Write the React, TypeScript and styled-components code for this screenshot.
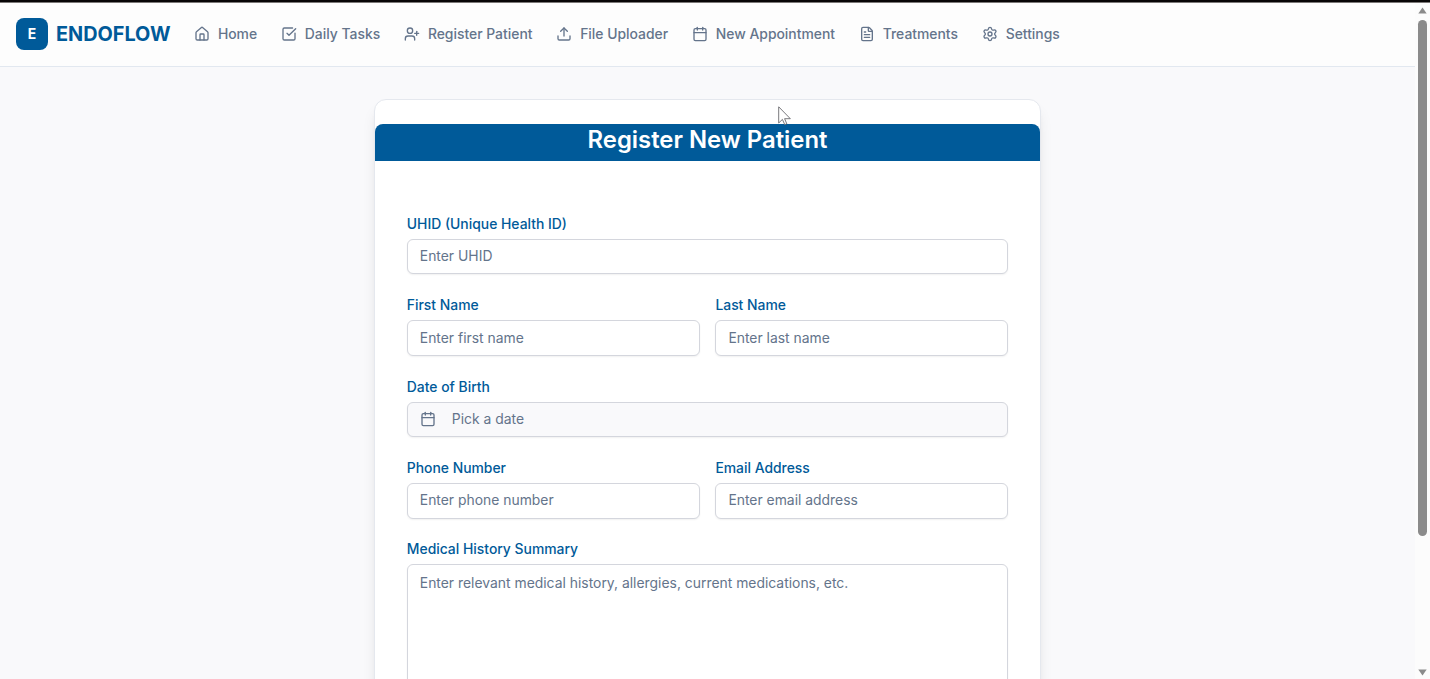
import React from 'react';
import styled, { createGlobalStyle } from 'styled-components';
import { House, SquareCheckBig, UserPlus, Upload, Calendar, FileText, Settings } from 'lucide-react';

const GlobalStyle = createGlobalStyle`
  *, *::before, *::after { box-sizing: border-box; }
  html, body { margin: 0; padding: 0; overflow: hidden; }
  body, input, textarea, button { font-family: Inter, "Liberation Sans", sans-serif; }
`;

const Screen = styled.div`
  height: 679px;
  display: flex;
  flex-direction: column;
  overflow: hidden;
  background: #f9f9fb;
`;

const TopEdge = styled.div`
  flex: none;
  height: 3px;
  background: #080606;
  border-bottom: 1px solid #7b7877;
`;

const Viewport = styled.div`
  flex: 1;
  min-height: 0;
  display: flex;
`;

const Page = styled.div`
  flex: 1;
  min-width: 0;
  overflow: hidden;
`;

const Header = styled.header`
  height: 64px;
  padding: 0 16px 1px;
  display: flex;
  align-items: center;
  background: #fdfdfd;
  border-bottom: 1px solid #e2e8f0;
`;

const Brand = styled.div`
  display: flex;
  align-items: center;
  gap: 8px;
  width: 178px;
  color: #005a99;
  font-size: 19.85px;
  font-weight: 700;
  white-space: nowrap;
`;

const BrandMark = styled.span`
  width: 32px;
  height: 32px;
  flex: none;
  display: grid;
  place-items: center;
  border-radius: 8px;
  background: #005a99;
  color: #fff;
  font-size: 13.9px;
`;

const Nav = styled.nav`
  display: flex;
  align-items: center;
  gap: 23.8px;
`;

const NavItem = styled.a`
  display: flex;
  align-items: center;
  gap: 7.9px;
  color: #64748b;
  font-size: 13.9px;
  font-weight: 500;
  line-height: 20px;
  white-space: nowrap;
  svg { flex: none; }
`;

const Main = styled.main`
  padding: 32px 0;
  display: flex;
  justify-content: center;
`;

const Card = styled.section`
  width: 667px;
  height: 800px;
  padding: 24px 0;
  border: 1px solid #e5e8ee;
  border-radius: 12px;
  background: #fff;
  box-shadow: 0 10px 15px -3px rgba(0, 0, 0, 0.1), 0 4px 6px -4px rgba(0, 0, 0, 0.1);
`;

const CardHeader = styled.div`
  height: 37px;
  border-radius: 8px 8px 0 0;
  background: #005a99;
  color: #fff;
  font-size: 23.85px;
  font-weight: 600;
  line-height: 32px;
  text-align: center;
`;

const Form = styled.form`
  padding: 53.8px 31.8px 0;
  display: flex;
  flex-direction: column;
  gap: 21.7px;
`;

const Row = styled.div`
  display: grid;
  grid-auto-flow: column;
  grid-auto-columns: 1fr;
  gap: 15.8px;
`;

const Field = styled.label`
  display: flex;
  flex-direction: column;
  gap: 6px;
  min-width: 0;
`;

const Label = styled.span`
  height: 18px;
  color: #005a99;
  font-size: 13.9px;
  font-weight: 500;
  line-height: 18px;
`;

const control = `
  width: 100%;
  border: 1px solid #d4d6dd;
  border-radius: 6px;
  background: #fff;
  box-shadow: 0 1px 2px rgba(0, 0, 0, 0.06);
  color: #64748b;
  font-size: 13.9px;
  outline: none;
  &::placeholder { color: #64748b; opacity: 1; }
`;

const Input = styled.input`
  ${control}
  height: 35.7px;
  padding: 0 12px 1px;
`;

const TextArea = styled.textarea`
  ${control}
  height: 150px;
  padding: 8px 12px;
  line-height: 20px;
  resize: none;
`;

const DateButton = styled.button`
  ${control}
  height: 35.7px;
  padding: 0 12px 1px;
  display: flex;
  align-items: center;
  gap: 16px;
  background: #f9f9fb;
`;

const Scrollbar = styled.div`
  width: 15px;
  flex: none;
  padding: 4px 0 3px;
  display: flex;
  flex-direction: column;
  align-items: center;
  background: #fcfcfc;
`;

const Thumb = styled.div`
  width: 9px;
  height: 516px;
  margin-top: 6px;
  margin-bottom: auto;
  border-radius: 5px;
  background: #8b8b8b;
`;

const Cursor = styled.svg`
  position: absolute;
  left: 778px;
  top: 106px;
`;

const navItems = [
  { icon: House, label: 'Home' },
  { icon: SquareCheckBig, label: 'Daily Tasks' },
  { icon: UserPlus, label: 'Register Patient' },
  { icon: Upload, label: 'File Uploader' },
  { icon: Calendar, label: 'New Appointment' },
  { icon: FileText, label: 'Treatments' },
  { icon: Settings, label: 'Settings' },
];

function TextField({ label, placeholder }: { label: string; placeholder: string }) {
  return (
    <Field>
      <Label>{label}</Label>
      <Input placeholder={placeholder} />
    </Field>
  );
}

export default function App() {
  return (
    <Screen>
      <GlobalStyle />
      <TopEdge />
      <Viewport>
        <Page>
          <Header>
            <Brand>
              <BrandMark>E</BrandMark>
              ENDOFLOW
            </Brand>
            <Nav>
              {navItems.map(({ icon: Icon, label }) => (
                <NavItem key={label}>
                  <Icon size={16} strokeWidth={2} />
                  {label}
                </NavItem>
              ))}
            </Nav>
          </Header>
          <Main>
            <Card>
              <CardHeader>Register New Patient</CardHeader>
              <Form>
                <TextField label="UHID (Unique Health ID)" placeholder="Enter UHID" />
                <Row>
                  <TextField label="First Name" placeholder="Enter first name" />
                  <TextField label="Last Name" placeholder="Enter last name" />
                </Row>
                <Field as="div">
                  <Label>Date of Birth</Label>
                  <DateButton type="button">
                    <Calendar size={16} strokeWidth={2} />
                    Pick a date
                  </DateButton>
                </Field>
                <Row>
                  <TextField label="Phone Number" placeholder="Enter phone number" />
                  <TextField label="Email Address" placeholder="Enter email address" />
                </Row>
                <Field>
                  <Label>Medical History Summary</Label>
                  <TextArea placeholder="Enter relevant medical history, allergies, current medications, etc." />
                </Field>
              </Form>
            </Card>
          </Main>
        </Page>
        <Scrollbar>
          <svg width="9" height="7" viewBox="0 0 9 7"><path d="M4.5 0.5 8.7 6.5H.3Z" fill="#8b8b8b" /></svg>
          <Thumb />
          <svg width="9" height="7" viewBox="0 0 9 7"><path d="M4.5 6.5 8.7.5H.3Z" fill="#8b8b8b" /></svg>
        </Scrollbar>
      </Viewport>
      <Cursor width="14" height="20" viewBox="0 0 14 20">
        <path d="M.7.8V17l3.7-3.6 2.4 5.3 2-.9-2.2-5.1h5.7Z" fill="#fff" stroke="#55555a" strokeWidth=".8" />
      </Cursor>
    </Screen>
  );
}
